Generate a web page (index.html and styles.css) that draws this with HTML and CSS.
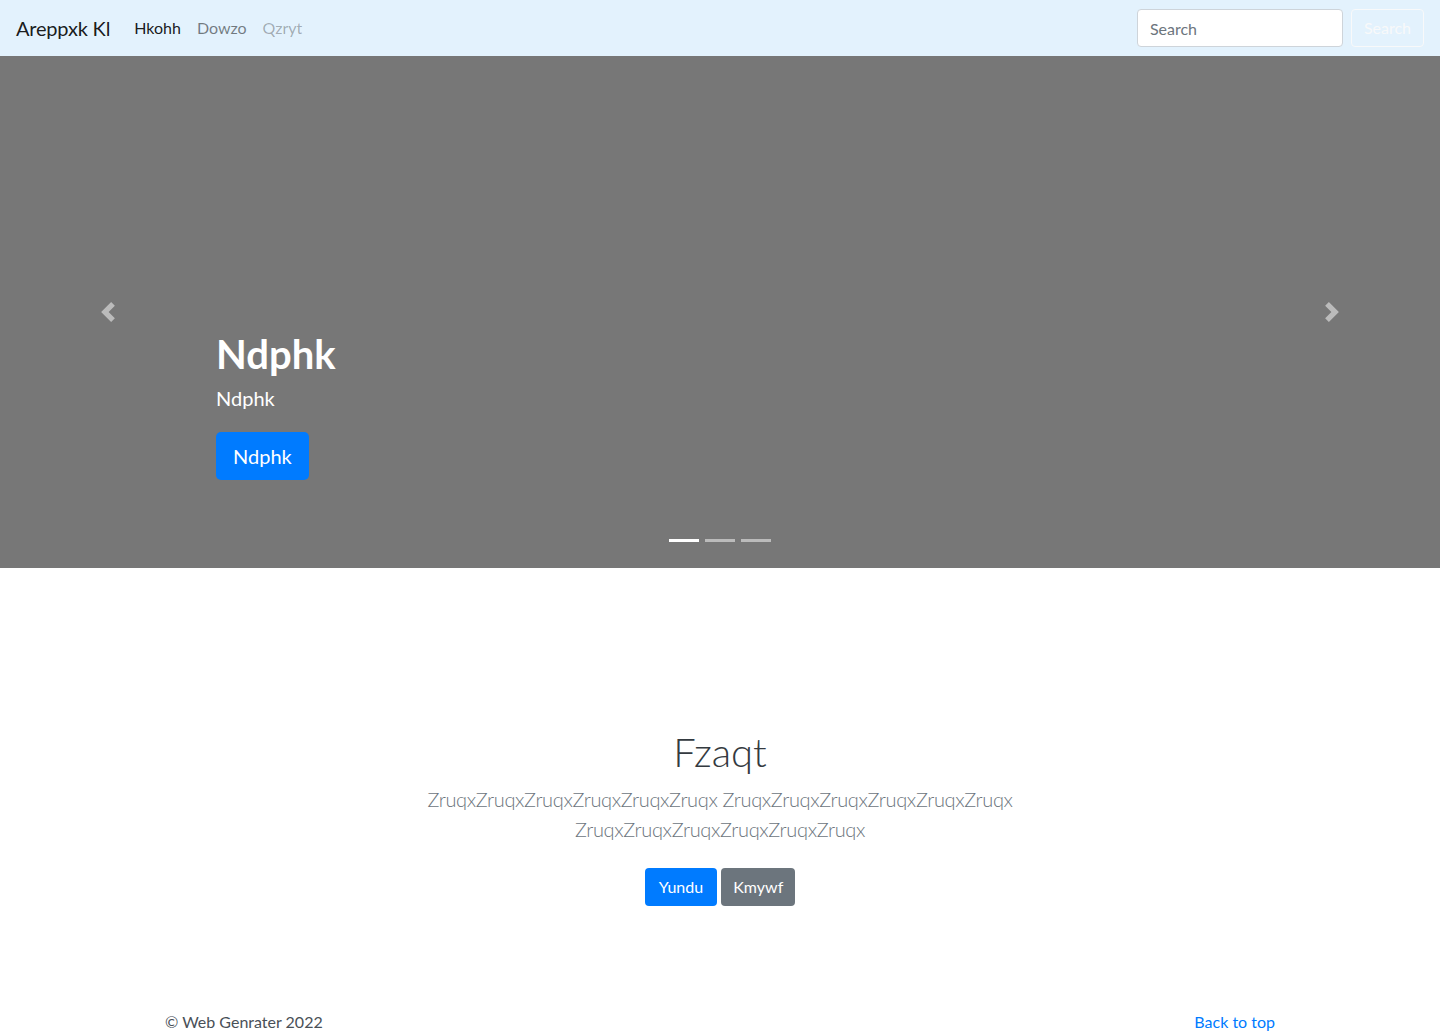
FILE: index.html
```html
<!DOCTYPE html>
<html lang="en">
<head>
<meta charset="utf-8">
<title>Areppxk Kl</title>
<link rel="stylesheet" href="styles.css">
</head>
<body>
<header class="navbar">
  <a class="brand" href="#">Areppxk Kl</a>
  <nav class="nav">
    <a class="nav-link active" href="#">Hkohh</a>
    <a class="nav-link" href="#">Dowzo</a>
    <a class="nav-link disabled" href="#">Qzryt</a>
  </nav>
  <form class="search">
    <input class="search-input" type="text" placeholder="Search">
    <button class="search-btn" type="button">Search</button>
  </form>
</header>

<section class="carousel">
  <div class="caption">
    <h1 class="caption-title">Ndphk</h1>
    <p class="caption-text">Ndphk</p>
    <p class="caption-actions"><a class="btn btn-lg btn-primary" href="#">Ndphk</a></p>
  </div>
  <a class="control control-prev" href="#">
    <svg class="control-icon" viewBox="0 0 8 8" width="20" height="20"><path fill="#fff" d="M5.25 0l-4 4 4 4 1.5-1.5-2.5-2.5 2.5-2.5-1.5-1.5z"/></svg>
  </a>
  <a class="control control-next" href="#">
    <svg class="control-icon" viewBox="0 0 8 8" width="20" height="20"><path fill="#fff" d="M2.75 0l-1.5 1.5 2.5 2.5-2.5 2.5 1.5 1.5 4-4-4-4z"/></svg>
  </a>
  <ol class="indicators">
    <li class="indicator active"></li>
    <li class="indicator"></li>
    <li class="indicator"></li>
  </ol>
</section>

<section class="jumbotron">
  <div class="jumbo-inner">
    <h1 class="jumbo-heading">Fzaqt</h1>
    <p class="lead">ZruqxZruqxZruqxZruqxZruqxZruqx ZruqxZruqxZruqxZruqxZruqxZruqx ZruqxZruqxZruqxZruqxZruqxZruqx</p>
    <p class="jumbo-actions">
      <a class="btn btn-primary" href="#">Yundu</a>
      <a class="btn btn-secondary" href="#">Kmywf</a>
    </p>
  </div>
</section>

<footer class="footer">
  <p class="copy">© Web Genrater 2022</p>
  <a class="top-link" href="#">Back to top</a>
</footer>
</body>
</html>
```

FILE: styles.css
```css
* { box-sizing: border-box; }
html, body { margin: 0; padding: 0; }
body {
  font-family: "Lato", "Open Sans", sans-serif;
  font-size: 16px;
  line-height: 1.5;
  color: #212529;
  background: #fff;
}
a { text-decoration: none; }
p { margin: 0; }
h1 { margin: 0; }

.navbar {
  height: 56px;
  background: #e3f2fd;
  display: flex;
  align-items: center;
  padding: 8px 16px;
}
.brand {
  font-size: 20px;
  line-height: 30px;
  color: rgba(0,0,0,.9);
  margin-right: 16px;
  letter-spacing: -0.2px;
}
.nav { display: flex; }
.nav-link {
  padding: 8px;
  color: rgba(0,0,0,.5);
  font-size: 16px;
}
.nav-link.active { color: rgba(0,0,0,.9); }
.nav-link.disabled { color: rgba(0,0,0,.3); }
.search { margin-left: auto; display: flex; align-items: center; }
.search-input {
  width: 206px;
  height: 38px;
  padding: 6px 12px;
  font: inherit;
  font-size: 16px;
  color: #495057;
  background: #fff;
  border: 1px solid #ced4da;
  border-radius: 4px;
  margin-right: 8px;
}
.search-input::placeholder { color: #6c757d; }
.search-btn {
  height: 38px;
  padding: 6px 12px;
  font: inherit;
  font-size: 16px;
  color: #f8f9fa;
  background: transparent;
  border: 1px solid #f8f9fa;
  border-radius: 4px;
}

.carousel {
  position: relative;
  height: 512px;
  background: #777;
  margin-bottom: 64px;
}
.caption {
  position: absolute;
  left: 15%;
  right: 15%;
  bottom: 48px;
  padding: 20px 0;
  color: #fff;
  z-index: 10;
}
.caption-title {
  font-size: 40px;
  line-height: 48px;
  font-weight: 700;
  margin-bottom: 5px;
}
.caption-text {
  font-size: 20px;
  line-height: 30px;
  margin-bottom: 19px;
}
.caption-actions { margin-bottom: 20px; line-height: 0; }
.btn {
  display: inline-block;
  color: #fff;
  border-radius: 4px;
  font-size: 16px;
  line-height: 24px;
  padding: 7px 13px;
}
.btn-lg {
  font-size: 20px;
  line-height: 30px;
  padding: 9px 17px;
  border-radius: 5px;
}
.btn-primary { background: #007bff; padding-left: 14px; padding-right: 14px; }
.btn-secondary { background: #6c757d; padding-left: 12px; padding-right: 12px; }
.btn-lg.btn-primary { padding-left: 17px; padding-right: 17px; }

.control {
  position: absolute;
  top: 0;
  bottom: 0;
  width: 15%;
  display: flex;
  align-items: center;
  justify-content: center;
  opacity: .5;
}
.control-prev { left: 0; }
.control-next { right: 0; }
.control-icon { display: block; }

.indicators {
  position: absolute;
  left: 0;
  right: 0;
  bottom: 26px;
  margin: 0;
  padding: 0;
  list-style: none;
  display: flex;
  justify-content: center;
  gap: 6px;
}
.indicator {
  width: 30px;
  height: 3px;
  background: rgba(255,255,255,.5);
}
.indicator.active { background: #fff; }

.jumbotron {
  padding: 96px 0;
  text-align: center;
}
.jumbo-inner {
  max-width: 640px;
  margin: 0 auto;
  padding: 0 15px;
}
.jumbo-heading {
  font-size: 40px;
  line-height: 48px;
  font-weight: 300;
  margin-bottom: 8px;
  color: #343a40;
}
.lead {
  font-size: 20px;
  line-height: 30px;
  font-weight: 300;
  color: #6c757d;
  margin-bottom: 16px;
  letter-spacing: -0.35px;
}
.jumbo-actions { padding: 8px 0; line-height: 0; }

.footer {
  max-width: 1140px;
  margin: 0 auto;
  padding: 0 15px;
  display: flex;
  justify-content: space-between;
  font-size: 16px;
  line-height: 24px;
}
.copy { color: #495057; }
.top-link { color: #007bff; }
```
